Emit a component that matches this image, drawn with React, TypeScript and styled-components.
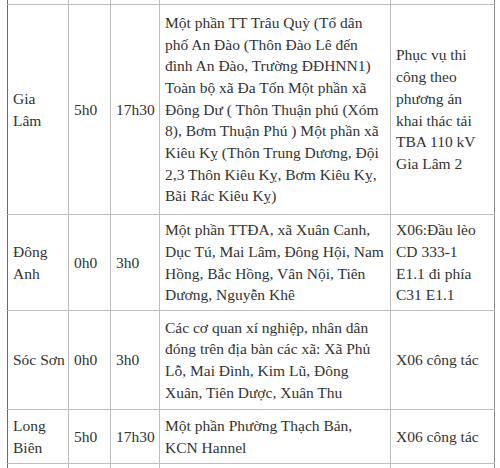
import * as React from 'react'
import styled, { createGlobalStyle } from 'styled-components'

const GlobalStyle = createGlobalStyle`
  html, body {
    margin: 0;
    padding: 0;
    background: #fff;
  }
`

const Page = styled.div`
  width: 500px;
  height: 468px;
  overflow: hidden;
  padding-left: 7px;
  box-sizing: border-box;
`

const Table = styled.table`
  border-collapse: collapse;
  table-layout: fixed;
  width: 487px;
  margin-top: -1px;
  font-family: "Liberation Serif", "Times New Roman", serif;
  font-size: 15.5px;
  line-height: 21.7px;
  color: #333;
`

const Row = styled.tr<{ $h: number }>`
  height: ${p => p.$h}px;
`

// Narrow columns (district, times) get a tighter right padding so the
// short values fit the way they do in the source table.
const Cell = styled.td<{ $tight?: boolean }>`
  border: 1px solid #bdbdbd;
  padding: 0 ${p => (p.$tight ? 2 : 4)}px 0 5px;
  vertical-align: middle;
  word-wrap: break-word;

  &:first-child {
    border-left-color: #6a6a6a;
  }
  &:last-child {
    border-right-color: #8a8a8a;
  }
`

type Outage = {
  area: string
  from: string
  to: string
  places: string
  reason: string
  height: number
}

const outages: Outage[] = [
  {
    area: 'Gia Lâm',
    from: '5h0',
    to: '17h30',
    places: 'Một phần TT Trâu Quỳ (Tổ dân phố An Đào (Thôn Đào Lê đến đình An Đào, Trường ĐĐHNN1) Toàn bộ xã Đa Tốn Một phần xã Đông Dư ( Thôn Thuận phú (Xóm 8), Bơm Thuận Phú ) Một phần xã Kiêu Kỵ (Thôn Trung Dương, Đội 2,3 Thôn Kiêu Kỵ, Bơm Kiêu Kỵ, Bãi Rác Kiêu Kỵ)',
    reason: 'Phục vụ thi công theo phương án khai thác tải TBA 110 kV Gia Lâm 2',
    height: 210,
  },
  {
    area: 'Đông Anh',
    from: '0h0',
    to: '3h0',
    places: 'Một phần TTĐA, xã Xuân Canh, Dục Tú, Mai Lâm, Đông Hội, Nam Hồng, Bắc Hồng, Vân Nội, Tiên Dương, Nguyễn Khê',
    reason: 'X06:Đầu lèo CD 333-1 E1.1 đi phía C31 E1.1',
    height: 96,
  },
  {
    area: 'Sóc Sơn',
    from: '0h0',
    to: '3h0',
    places: 'Các cơ quan xí nghiệp, nhân dân đóng trên địa bàn các xã: Xã Phủ Lỗ, Mai Đình, Kim Lũ, Đông Xuân, Tiên Dược, Xuân Thu',
    reason: 'X06 công tác',
    height: 99,
  },
  {
    area: 'Long Biên',
    from: '5h0',
    to: '17h30',
    places: 'Một phần Phường Thạch Bản, KCN Hannel',
    reason: 'X06 công tác',
    height: 54,
  },
]

const EmptyRow = ({ h }: { h: number }) => (
  <Row $h={h}>
    <Cell /><Cell /><Cell /><Cell /><Cell />
  </Row>
)

export default function App () {
  return (
    <Page>
      <GlobalStyle />
      <Table>
        <colgroup>
          <col style={{ width: 61 }} />
          <col style={{ width: 42 }} />
          <col style={{ width: 49 }} />
          <col style={{ width: 231 }} />
          <col style={{ width: 104 }} />
        </colgroup>
        <tbody>
          <EmptyRow h={5} />
          {outages.map(o => (
            <Row key={o.area} $h={o.height}>
              <Cell $tight>{o.area}</Cell>
              <Cell $tight>{o.from}</Cell>
              <Cell $tight>{o.to}</Cell>
              <Cell>{o.places}</Cell>
              <Cell>{o.reason}</Cell>
            </Row>
          ))}
          <EmptyRow h={30} />
        </tbody>
      </Table>
    </Page>
  )
}
